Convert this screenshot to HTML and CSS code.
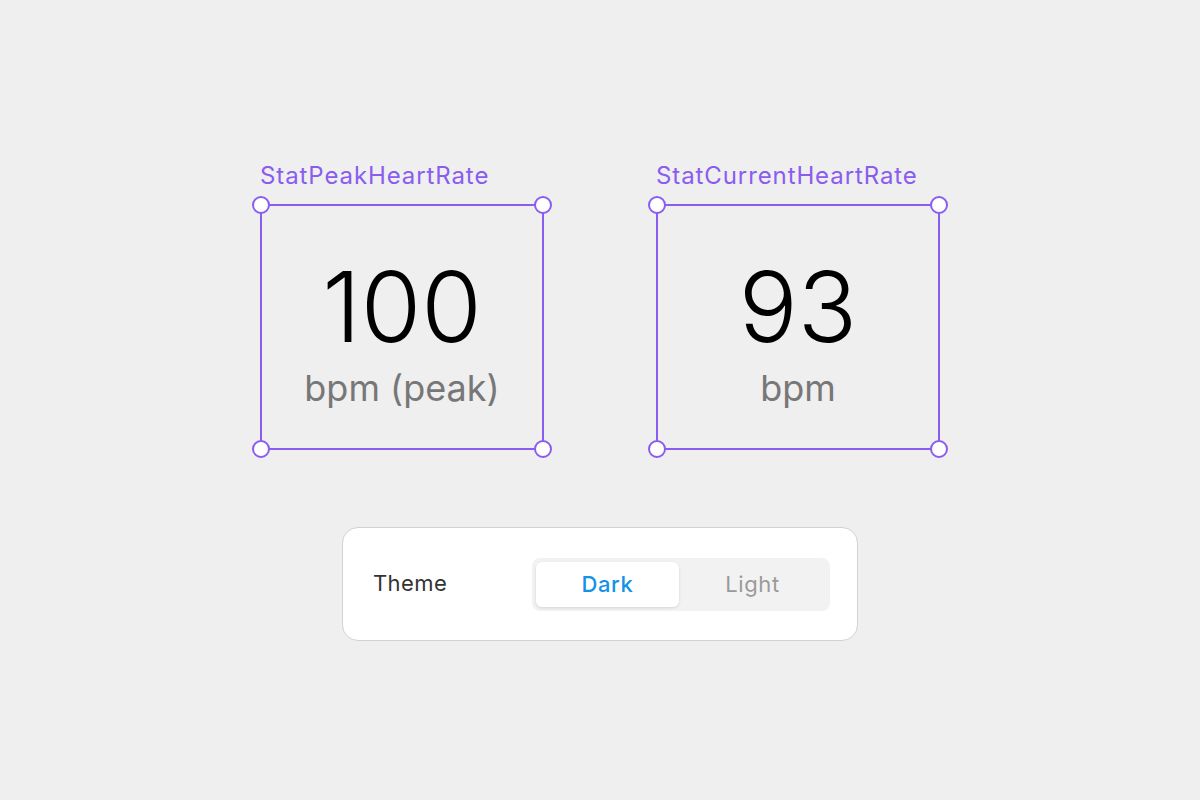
FILE: index.html
```html
<!DOCTYPE html>
<html lang="en">
<head>
    <meta charset="UTF-8">
    <meta name="viewport" content="width=device-width, initial-scale=1.0">
    <title>Heart Rate Stats</title>
    <link rel="stylesheet" href="styles.css">
</head>
<body>

<div class="canvas">

    <!-- Stat components -->
    <div class="stats">
        <div class="stat">
            <div class="stat-name">StatPeakHeartRate</div>
            <div class="stat-box">
                <span class="handle tl"></span>
                <span class="handle tr"></span>
                <span class="handle bl"></span>
                <span class="handle br"></span>
                <div class="stat-value">100</div>
                <div class="stat-unit">bpm (peak)</div>
            </div>
        </div>
        <div class="stat">
            <div class="stat-name">StatCurrentHeartRate</div>
            <div class="stat-box">
                <span class="handle tl"></span>
                <span class="handle tr"></span>
                <span class="handle bl"></span>
                <span class="handle br"></span>
                <div class="stat-value">93</div>
                <div class="stat-unit">bpm</div>
            </div>
        </div>
    </div>

    <!-- Theme switcher -->
    <div class="panel">
        <span class="panel-label">Theme</span>
        <div class="segmented">
            <button class="segment active">Dark</button>
            <button class="segment">Light</button>
        </div>
    </div>

</div>

</body>
</html>
```

FILE: styles.css
```css
body {
    margin: 0;
    background-color: #efefef;
    font-family: Inter, "Noto Sans", sans-serif;
}
.canvas {
    display: flex;
    flex-direction: column;
    align-items: center;
    padding-top: 160px;
}
.stats {
    display: flex;
    gap: 112px;
}
.stat-name {
    color: #8a5cf0;
    font-size: 24px;
    letter-spacing: 0.9px;
    line-height: 32px;
    margin-bottom: 12px;
}
.stat-box {
    position: relative;
    box-sizing: border-box;
    width: 284px;
    height: 246px;
    border: 2px solid #8a5cf0;
    display: flex;
    flex-direction: column;
    align-items: center;
    padding-top: 42px;
}
.handle {
    position: absolute;
    width: 14px;
    height: 14px;
    border: 2px solid #8a5cf0;
    border-radius: 50%;
    background-color: #fff;
}
.handle.tl { top: -10px; left: -10px; }
.handle.tr { top: -10px; right: -10px; }
.handle.bl { bottom: -10px; left: -10px; }
.handle.br { bottom: -10px; right: -10px; }
.stat-value {
    font-size: 98px;
    font-weight: 300;
    line-height: 118px;
    color: #000;
}
.stat-unit {
    font-size: 36px;
    line-height: 44px;
    color: #777;
}
.panel {
    margin-top: 77px;
    box-sizing: border-box;
    width: 516px;
    height: 114px;
    background-color: #fff;
    border: 1.5px solid #d2d2d2;
    border-radius: 16px;
    display: flex;
    align-items: center;
    justify-content: space-between;
    padding: 0 27px 0 30px;
}
.panel-label {
    font-size: 22px;
    letter-spacing: 0.4px;
    color: #333;
    margin-bottom: 3px;
}
.segmented {
    display: flex;
    width: 298px;
    height: 53px;
    box-sizing: border-box;
    padding: 4px;
    background-color: #f2f2f2;
    border-radius: 8px;
}
.segment {
    flex: 1;
    border: none;
    background: none;
    font-family: inherit;
    font-size: 22px;
    letter-spacing: 0.6px;
    color: #9a9a9a;
    border-radius: 6px;
    padding: 0;
}
.segment.active {
    flex: 0 0 143px;
    background-color: #fff;
    color: #1592e6;
    font-weight: 500;
    box-shadow: 0 1px 3px rgba(0, 0, 0, 0.12);
}
```
